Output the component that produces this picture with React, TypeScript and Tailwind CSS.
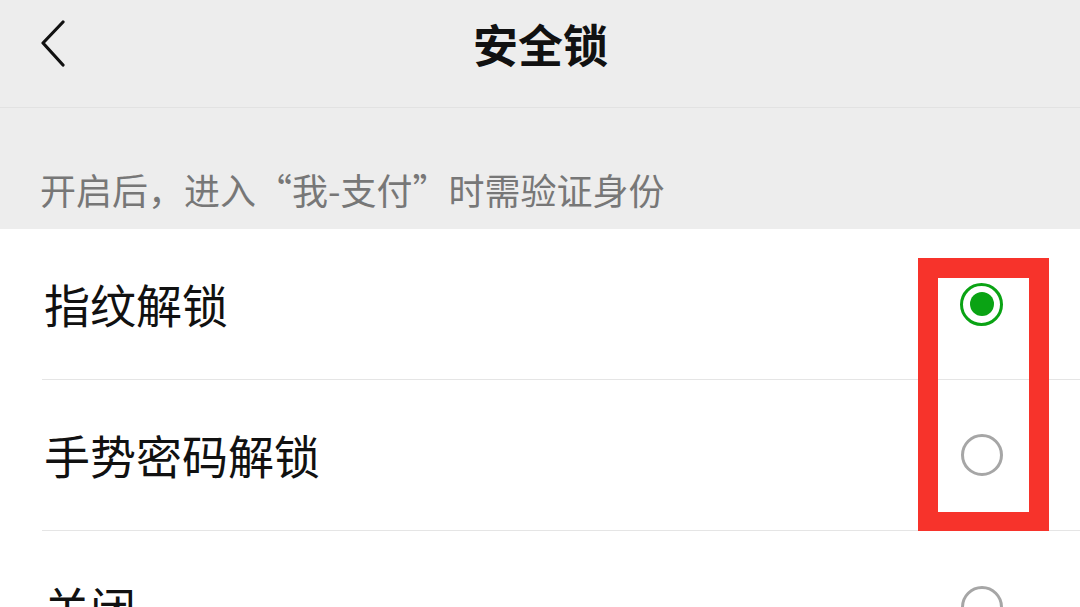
import React, { useState } from 'react';

const font = { fontFamily: '"Noto Sans CJK SC", "Noto Sans", sans-serif' };

function Radio({ checked }: { checked: boolean }) {
  if (checked) {
    return (
      <div className="w-[43px] h-[43px] rounded-full border-[3px] border-[#0aa314] flex items-center justify-center">
        <div className="w-[24px] h-[24px] rounded-full bg-[#0aa314]" />
      </div>
    );
  }
  return <div className="w-[42px] h-[42px] rounded-full border-[3px] border-[#a6a6a6]" />;
}

const options = ['指纹解锁', '手势密码解锁', '关闭'];

export default function App() {
  const [selected] = useState(0);

  return (
    <div className="w-[1080px] h-[607px] overflow-hidden bg-[#ededed] relative" style={font}>
      <div className="h-[108px] flex items-center relative border-b border-[#e2e2e2]">
        <div className="absolute left-[38px] top-[20px]">
          <svg width="30" height="48" viewBox="0 0 30 48" fill="none">
            <path d="M25 2 L5 23 L25 45" stroke="#111" strokeWidth="3.2" strokeLinecap="round" strokeLinejoin="round" />
          </svg>
        </div>
        <h1 className="w-full text-center text-[45px] font-bold text-[#111] leading-none pb-[20px] pl-[1px]">安全锁</h1>
      </div>

      <div className="h-[121px] flex items-end pl-[40px] pb-[22px]">
        <p className="text-[36px] leading-none text-[#777]">开启后，进入“我-支付”时需验证身份</p>
      </div>

      <div className="bg-white">
        {options.map((label, i) => (
          <div key={label} className="pl-[42px]">
            <div className={`h-[151px] flex items-center justify-between pr-[77px] ${i < options.length - 1 ? 'border-b border-[#e5e5e5]' : ''}`}>
              <span className="text-[46px] leading-none text-[#111] pl-[2px] pb-[2px]">{label}</span>
              <Radio checked={selected === i} />
            </div>
          </div>
        ))}
      </div>

      <div className="absolute left-[918px] top-[258px] w-[131px] h-[273px] border-[20px] border-b-[19px] border-[#f7332b]" />
    </div>
  );
}
